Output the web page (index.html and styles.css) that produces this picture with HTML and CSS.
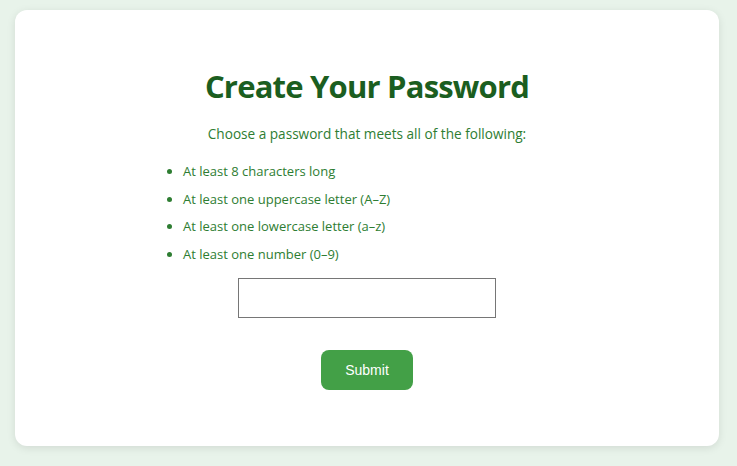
FILE: index.html
```html
<!DOCTYPE html>
<html lang="en">
<head>
<meta charset="utf-8">
<title>Create Your Password</title>
<link rel="stylesheet" href="styles.css">
</head>
<body>
<main class="card">
  <h1 class="title">Create Your Password</h1>
  <p class="subtitle">Choose a password that meets all of the following:</p>
  <ul class="rules">
    <li>At least 8 characters long</li>
    <li>At least one uppercase letter (A–Z)</li>
    <li>At least one lowercase letter (a–z)</li>
    <li>At least one number (0–9)</li>
  </ul>
  <input class="field" type="password" aria-label="Password">
  <button class="submit" type="button">Submit</button>
</main>
</body>
</html>
```
FILE: styles.css
```css
html, body {
  margin: 0;
  height: 100%;
}
body {
  background: #e8f3ea;
  padding: 10px 18px 20px 15px;
  box-sizing: border-box;
  font-family: "Open Sans", "Noto Sans", sans-serif;
}
.card {
  background: #ffffff;
  border-radius: 12px;
  box-shadow: 0 2px 8px rgba(0, 0, 0, 0.10);
  height: 436px;
  box-sizing: border-box;
  padding: 56px 40px 0;
  display: flex;
  flex-direction: column;
  align-items: center;
}
.title {
  margin: 0;
  font-size: 31px;
  line-height: 40px;
  font-weight: 700;
  letter-spacing: -0.8px;
  color: #1b5e20;
}
.subtitle {
  margin: 18px 0 0;
  font-size: 13.6px;
  line-height: 20px;
  color: #2e7d32;
}
.rules {
  margin: 17px 0 0 110px;
  padding: 0 0 0 18px;
  align-self: flex-start;
  color: #2e7d32;
  font-size: 13px;
}
.rules li {
  line-height: 20px;
  margin-bottom: 7.7px;
}
.field {
  margin-top: 6px;
  width: 258px;
  height: 40px;
  box-sizing: border-box;
  border: 1px solid #767676;
  border-radius: 0;
  padding: 0 8px;
  font-size: 14px;
}
.submit {
  margin-top: 32px;
  width: 92px;
  height: 40px;
  border: none;
  border-radius: 8px;
  background: #43a047;
  color: #ffffff;
  font-family: "Liberation Sans", Arial, sans-serif;
  font-size: 14px;
}
```
